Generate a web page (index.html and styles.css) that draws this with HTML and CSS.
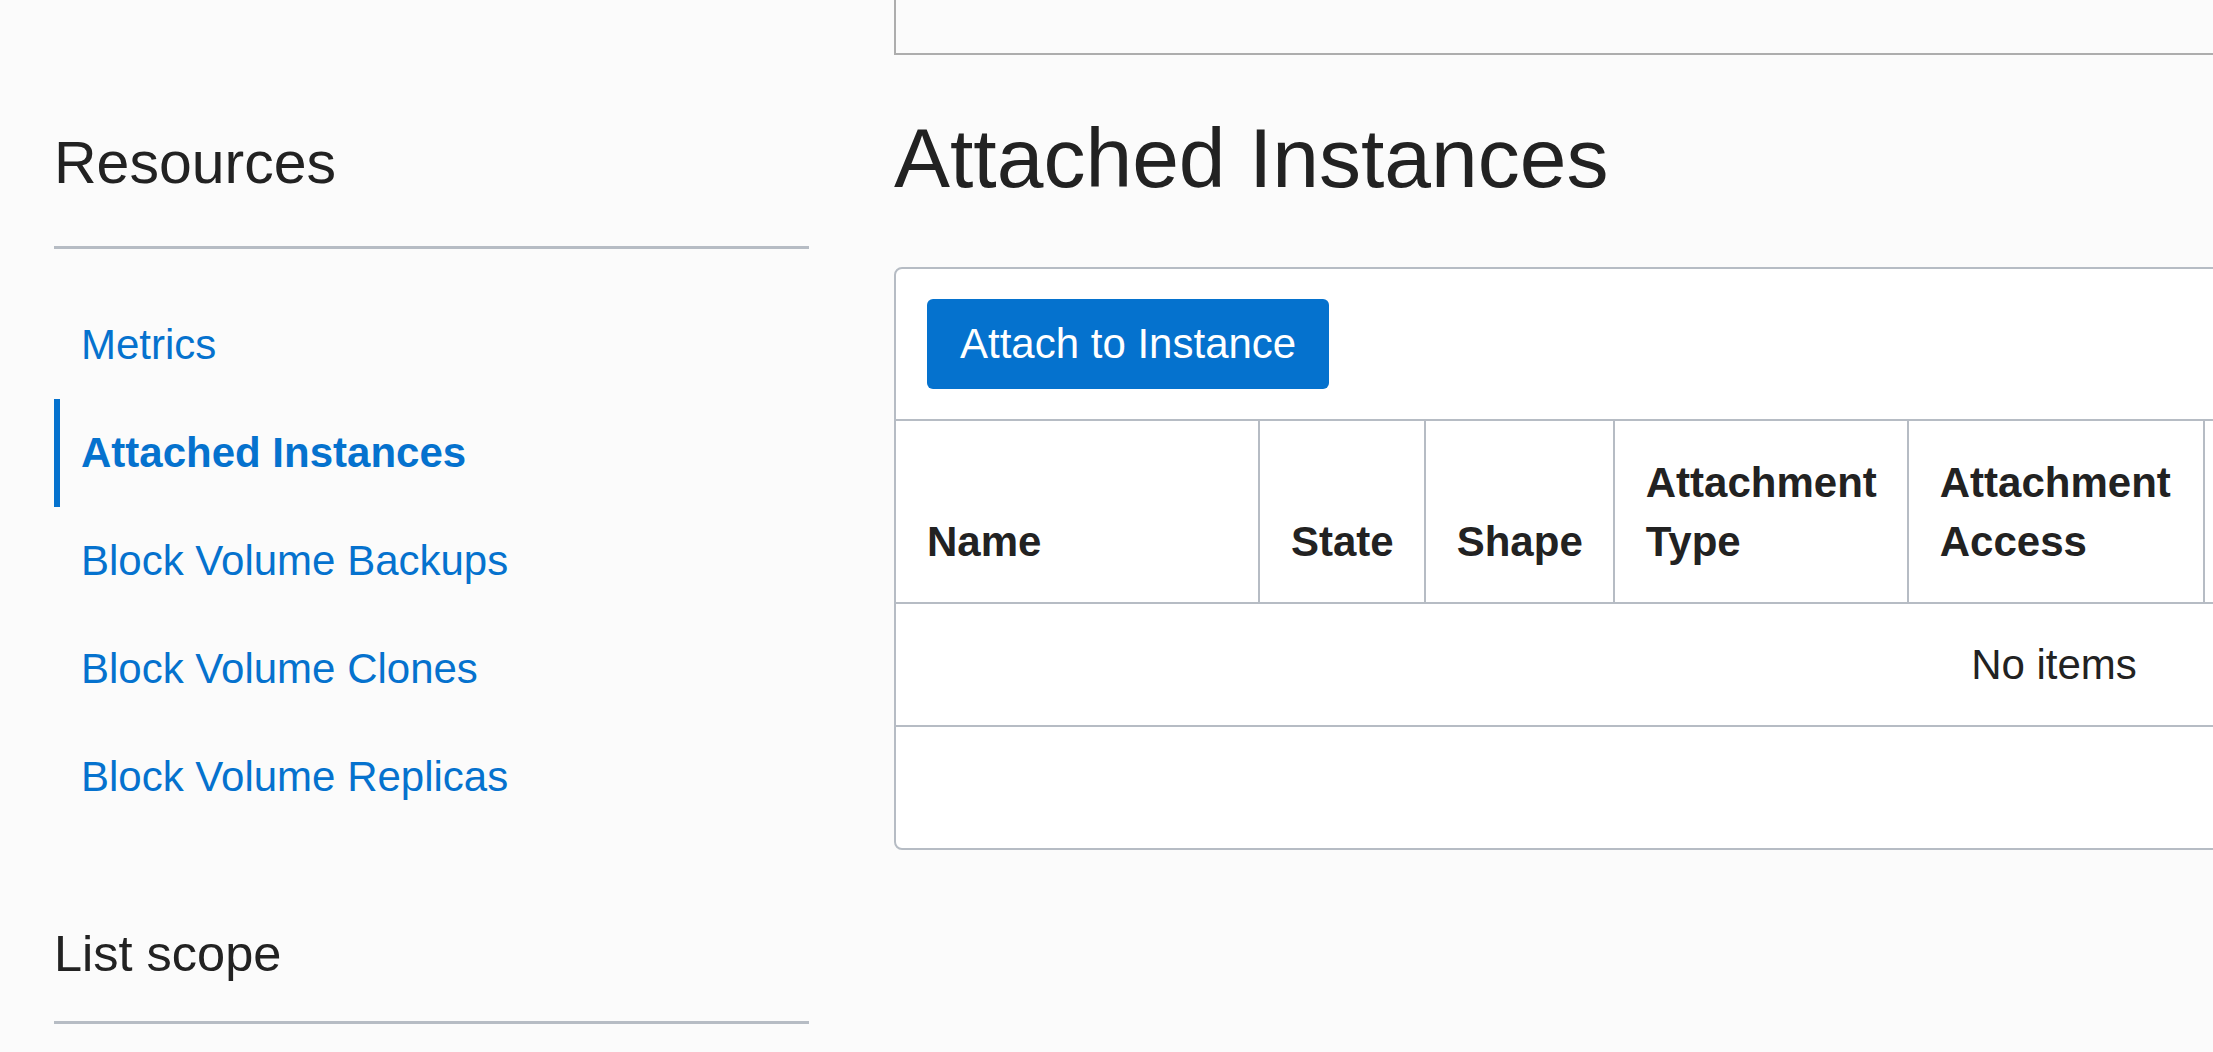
FILE: index.html
```html
<!DOCTYPE html>
<html lang="en">
<head>
<meta charset="utf-8">
<title>Attached Instances</title>
<link rel="stylesheet" href="styles.css">
</head>
<body>
<div class="layout">
  <aside class="sidebar">
    <h2 class="side-heading side-heading--resources">Resources</h2>
    <nav class="side-nav">
      <a class="side-link" href="#">Metrics</a>
      <a class="side-link side-link--active" href="#">Attached Instances</a>
      <a class="side-link" href="#">Block Volume Backups</a>
      <a class="side-link" href="#">Block Volume Clones</a>
      <a class="side-link" href="#">Block Volume Replicas</a>
    </nav>
    <h2 class="side-heading side-heading--scope">List scope</h2>
  </aside>
  <main class="content">
    <div class="top-box"></div>
    <h1 class="page-title">Attached Instances</h1>
    <section class="card">
      <div class="toolbar">
        <button class="btn-primary" type="button">Attach to Instance</button>
      </div>
      <div class="table-head">
        <div class="th th--name">Name</div>
        <div class="th th--state">State</div>
        <div class="th th--shape">Shape</div>
        <div class="th th--type">Attachment Type</div>
        <div class="th th--access">Attachment Access</div>
        <div class="th th--rest"></div>
      </div>
      <div class="table-empty">No items</div>
      <div class="table-foot"></div>
    </section>
  </main>
</div>
</body>
</html>
```

FILE: styles.css
```css
html, body {
  margin: 0;
  padding: 0;
  overflow: hidden;
}

body {
  background: #fbfbfb;
  color: #222222;
  font-family: "Liberation Sans", Arial, sans-serif;
  font-size: 42px;
  width: 2213px;
  height: 1052px;
}

.layout {
  display: flex;
  align-items: flex-start;
  gap: 85px;
  padding-left: 54px;
}

/* Sidebar */
.sidebar {
  flex: 0 0 755px;
  width: 755px;
}

.side-heading {
  margin: 0;
  font-weight: normal;
  color: #222222;
}

.side-heading--resources {
  font-size: 59px;
  line-height: 80px;
  padding-top: 123px;
  padding-bottom: 43px;
  border-bottom: 3px solid #b6bcc4;
}

.side-heading--scope {
  font-size: 50.5px;
  line-height: 68px;
  padding-top: 89px;
  padding-bottom: 33px;
  border-bottom: 3px solid #b6bcc4;
}

.side-nav {
  display: flex;
  flex-direction: column;
  margin-top: 42px;
}

.side-link {
  display: block;
  height: 108px;
  line-height: 108px;
  padding-left: 27px;
  color: #0572ce;
  text-decoration: none;
  white-space: nowrap;
}

.side-link--active {
  font-weight: bold;
  border-left: 6px solid #0572ce;
  padding-left: 21px;
}

/* Main content */
.content {
  flex: 0 0 2320px;
  width: 2320px;
}

.top-box {
  height: 53px;
  border-left: 2px solid #adadad;
  border-bottom: 2px solid #adadad;
}

.page-title {
  margin: 53px 0 59px;
  font-size: 84px;
  line-height: 100px;
  font-weight: normal;
  color: #222222;
  white-space: nowrap;
}

.card {
  background: #ffffff;
  border: 2px solid #b6bcc4;
  border-radius: 8px;
}

.toolbar {
  padding: 30px 31px;
  border-bottom: 2px solid #b6bcc4;
}

.btn-primary {
  display: block;
  height: 90px;
  padding: 0 33px;
  border: 0;
  border-radius: 6px;
  background: #0572ce;
  color: #ffffff;
  font-family: inherit;
  font-size: 42px;
  line-height: 90px;
  white-space: nowrap;
  cursor: pointer;
}

.table-head {
  display: flex;
  height: 181px;
  border-bottom: 2px solid #b6bcc4;
}

.th {
  box-sizing: border-box;
  display: flex;
  align-items: flex-end;
  padding: 0 30px 31px 31px;
  font-weight: bold;
  line-height: 59px;
  border-right: 2px solid #b6bcc4;
  color: #222222;
}

.th--name { flex: 0 0 364px; }
.th--state { flex: 0 0 165px; }
.th--shape { flex: 0 0 189px; }
.th--type { flex: 0 0 294px; }
.th--access { flex: 0 0 296px; }
.th--rest { flex: 1 1 auto; border-right: 0; }

.table-empty {
  height: 121px;
  line-height: 121px;
  text-align: center;
  border-bottom: 2px solid #b6bcc4;
  color: #222222;
}

.table-foot {
  height: 121px;
}
```
